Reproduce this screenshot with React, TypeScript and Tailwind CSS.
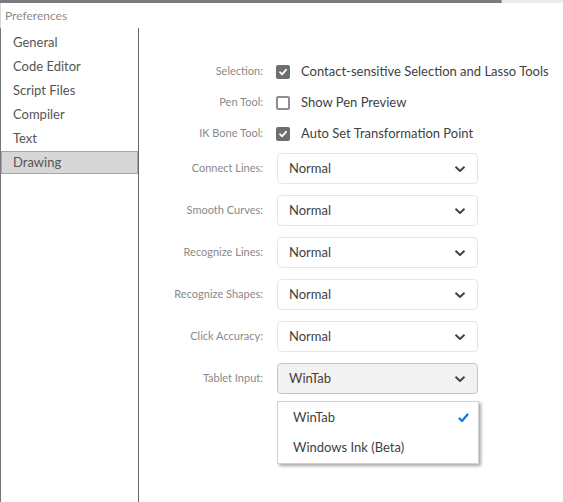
const font = { fontFamily: "Lato, 'Open Sans', sans-serif" };

function Checkbox({ checked }: { checked: boolean }) {
  if (!checked) {
    return <span className="block h-[14px] w-[14px] rounded-[2px] border-2 border-[#8e8e8e] bg-white" />;
  }
  return (
    <span className="flex h-[14px] w-[14px] items-center justify-center rounded-[2px] bg-[#6e6e6e]">
      <svg width="10" height="10" viewBox="0 0 10 10">
        <path d="M2 5.2 L4.1 7.3 L8 2.8" fill="none" stroke="#fff" strokeWidth="1.8" strokeLinecap="round" strokeLinejoin="round" />
      </svg>
    </span>
  );
}

function Chevron() {
  return (
    <svg width="12" height="8" viewBox="0 0 12 8">
      <path d="M1.5 1.8 L6 6 L10.5 1.8" fill="none" stroke="#444" strokeWidth="2" strokeLinejoin="round" />
    </svg>
  );
}

const sidebar = ["General", "Code Editor", "Script Files", "Compiler", "Text", "Drawing"];

const checks = [
  { label: "Selection:", text: "Contact-sensitive Selection and Lasso Tools", checked: true },
  { label: "Pen Tool:", text: "Show Pen Preview", checked: false },
  { label: "IK Bone Tool:", text: "Auto Set Transformation Point", checked: true }
];

const selects = ["Connect Lines:", "Smooth Curves:", "Recognize Lines:", "Recognize Shapes:", "Click Accuracy:"];

export default function App() {
  return (
    <div className="flex h-[502px] w-[563px] flex-col overflow-hidden bg-white" style={font}>
      <div className="flex h-[3px] shrink-0">
        <div className="flex-1 bg-[#7b7b7b]" />
        <div className="w-[62px] border-l border-[#9a9a9a] bg-[#ececec]" />
      </div>
      <div className="flex h-[25px] shrink-0 items-center border-l border-[#d8d8d8] pl-[4px] text-[12px] text-[#8c8c8c]">
        Preferences
      </div>
      <div className="flex flex-1 border-l border-[#777]">
        <div className="w-[138px] shrink-0 border-r border-[#666] pt-[3px]">
          {sidebar.map((item) =>
            item === "Drawing" ? (
              <div key={item} className="flex h-[23px] items-center border border-[#a6a6a6] bg-[#d7d7d7] pl-[11px] text-[13px] text-[#555]">
                {item}
              </div>
            ) : (
              <div key={item} className="flex h-[24px] items-center pl-[12px] text-[13px] text-[#555]">
                {item}
              </div>
            )
          )}
        </div>
        <div className="flex flex-1 flex-col pt-[28px]">
          {checks.map((c) => (
            <div key={c.label} className="flex h-[31px] items-center gap-[13px]">
              <div className="w-[124px] text-right text-[11px] text-[#8a8a8a]">{c.label}</div>
              <Checkbox checked={c.checked} />
              <div className="ml-[-2px] text-[13px] text-[#3f3f3f]">{c.text}</div>
            </div>
          ))}
          <div className="mt-[4px] flex flex-col gap-[11px]">
            {selects.map((s) => (
              <div key={s} className="flex h-[31px] items-center gap-[14px]">
                <div className="w-[124px] text-right text-[11px] text-[#8a8a8a]">{s}</div>
                <div className="flex h-[31px] w-[201px] items-center justify-between rounded-[4px] border border-[#e6e6e6] pl-[11px] pr-[11px] text-[13px] text-[#3f3f3f]">
                  <span>Normal</span>
                  <Chevron />
                </div>
              </div>
            ))}
            <div className="flex h-[31px] items-center gap-[14px]">
              <div className="w-[124px] text-right text-[11px] text-[#8a8a8a]">Tablet Input:</div>
              <div className="flex h-[31px] w-[201px] items-center justify-between rounded-[4px] border-[1.5px] border-[#c4c4c4] bg-[#f2f2f2] pl-[11px] pr-[11px] text-[13px] text-[#3f3f3f]">
                <span>WinTab</span>
                <Chevron />
              </div>
            </div>
          </div>
          <div className="ml-[138px] mt-[7px] w-[202px] border border-[#d2d2d2] bg-white shadow-[2px_2px_3px_rgba(0,0,0,0.35)]">
            <div className="flex h-[31px] items-center justify-between pl-[15px] pr-[9px] text-[13px] text-[#3f3f3f]">
              <span>WinTab</span>
              <svg width="11" height="10" viewBox="0 0 11 10">
                <path d="M1.5 5.5 L4 8 L9.5 1.5" fill="none" stroke="#1473e6" strokeWidth="2.2" strokeLinecap="round" strokeLinejoin="round" />
              </svg>
            </div>
            <div className="flex h-[30px] items-center pl-[15px] text-[13px] text-[#3f3f3f]">Windows Ink (Beta)</div>
          </div>
        </div>
      </div>
    </div>
  );
}
